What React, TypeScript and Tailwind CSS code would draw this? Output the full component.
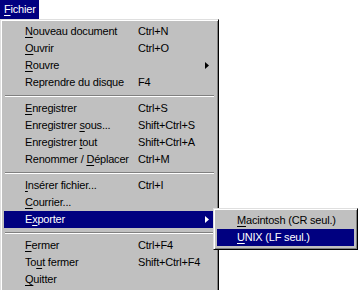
import React from 'react';

type Item =
  | { sep: true }
  | { sep?: false; label: React.ReactNode; shortcut?: string; sub?: boolean; active?: boolean };

const u = (s: string) => <span className="underline underline-offset-[2px]">{s}</span>;

const items: Item[] = [
  { label: <>{u('N')}ouveau document</>, shortcut: 'Ctrl+N' },
  { label: <>{u('O')}uvrir</>, shortcut: 'Ctrl+O' },
  { label: <>{u('R')}ouvre</>, sub: true },
  { label: <>Reprendre du disque</>, shortcut: 'F4' },
  { sep: true },
  { label: <>{u('E')}nregistrer</>, shortcut: 'Ctrl+S' },
  { label: <>Enregistrer {u('s')}ous...</>, shortcut: 'Shift+Ctrl+S' },
  { label: <>Enregistrer {u('t')}out</>, shortcut: 'Shift+Ctrl+A' },
  { label: <>Renommer / {u('D')}éplacer</>, shortcut: 'Ctrl+M' },
  { sep: true },
  { label: <>{u('I')}nsérer fichier...</>, shortcut: 'Ctrl+I' },
  { label: <>{u('C')}ourrier...</> },
  { label: <>E{u('x')}porter</>, sub: true, active: true },
  { sep: true },
  { label: <>{u('F')}ermer</>, shortcut: 'Ctrl+F4' },
  { label: <>To{u('u')}t fermer</>, shortcut: 'Shift+Ctrl+F4' },
  { label: <>{u('Q')}uitter</> },
];

const bevel =
  'border border-t-[#dfdfdf] border-l-[#dfdfdf] border-r-black border-b-black shadow-[inset_1px_1px_#ffffff,inset_-1px_-1px_#808080]';

function Arrow({ white }: { white?: boolean }) {
  return (
    <svg width="4" height="7" viewBox="0 0 4 7" className="block">
      <path d="M0 0 L4 3.5 L0 7 Z" fill={white ? '#fff' : '#000'} />
    </svg>
  );
}

function Submenu() {
  return (
    <div className={`absolute left-[209px] top-[-3px] w-[145px] bg-[#c0c0c0] p-[3px] ${bevel}`}>
      <div className="flex h-[17px] items-center pl-[20px] text-black">
        {u('M')}acintosh (CR seul.)
      </div>
      <div className="flex h-[17px] items-center bg-[#000080] pl-[20px] text-white">
        {u('U')}NIX (LF seul.)
      </div>
    </div>
  );
}

export default function App() {
  return (
    <div className="h-[290px] w-[360px] bg-white font-['Liberation_Sans',Arial,sans-serif] text-[11px] leading-none tracking-[-0.2px] text-black">
      <div className="flex h-[19px] w-[39px] items-center bg-[#000080] pl-[4px] text-white">
        {u('F')}ichier
      </div>
      <div className={`relative w-[219px] bg-[#c0c0c0] p-[3px] ${bevel}`}>
        {items.map((it, i) =>
          it.sep ? (
            <div key={i} className="flex h-[9px] flex-col justify-center px-[1px]">
              <div className="h-px bg-[#808080]" />
              <div className="h-px bg-white" />
            </div>
          ) : (
            <div
              key={i}
              className={`relative flex h-[17px] items-center ${it.active ? 'bg-[#000080] text-white' : ''}`}
            >
              <div className="w-[134px] shrink-0 pl-[21px] whitespace-nowrap">{it.label}</div>
              <div className="flex-1 whitespace-nowrap">{it.shortcut}</div>
              {it.sub && (
                <div className="pr-[6px]">
                  <Arrow white={it.active} />
                </div>
              )}
              {it.active && <Submenu />}
            </div>
          )
        )}
      </div>
    </div>
  );
}
